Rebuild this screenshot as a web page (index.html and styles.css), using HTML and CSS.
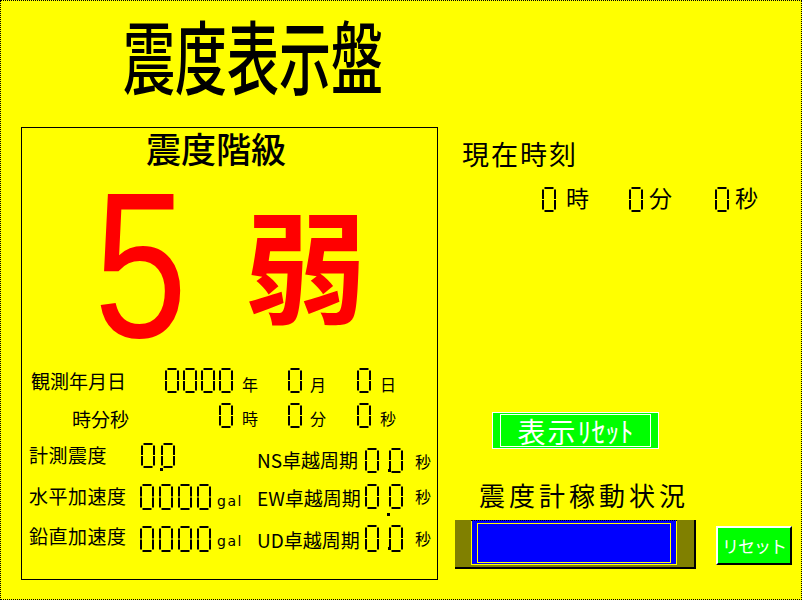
FILE: index.html
```html
<!DOCTYPE html>
<html lang="ja">
<head>
<meta charset="utf-8">
<title>震度表示盤</title>
<link rel="stylesheet" href="styles.css">
</head>
<body>
<svg class="defs" aria-hidden="true">
  <symbol id="seg0" viewBox="0 0 14 26" preserveAspectRatio="none">
    <path d="M2.5 0h9v2h-9z M2.5 24h9v2h-9z M0 2.5h2v10h-2z M0 13.5h2v10h-2z M12 2.5h2v10h-2z M12 13.5h2v10h-2z"/>
  </symbol>
</svg>
<div class="screen">
  <h1 class="title">震度表示盤</h1>
  <div class="main">
    <section class="panel">
      <h2 class="heading">震度階級</h2>
      <div class="big"><span class="big-num">5</span><span class="big-kanji">弱</span></div>

      <div class="row row-date">
        <span class="lab">観測年月日</span>
        <span class="num4">
          <svg class="dg"><use href="#seg0"/></svg>
          <svg class="dg"><use href="#seg0"/></svg>
          <svg class="dg"><use href="#seg0"/></svg>
          <svg class="dg"><use href="#seg0"/></svg>
        </span>
        <span class="unit unit-1">年</span>
        <svg class="dg dg-mid"><use href="#seg0"/></svg>
        <span class="unit unit-2">月</span>
        <svg class="dg dg-last"><use href="#seg0"/></svg>
        <span class="unit unit-3">日</span>
      </div>

      <div class="row row-time">
        <span class="lab">時分秒</span>
        <span class="num4">
          <svg class="dg"><use href="#seg0"/></svg>
        </span>
        <span class="unit unit-1">時</span>
        <svg class="dg dg-mid"><use href="#seg0"/></svg>
        <span class="unit unit-2">分</span>
        <svg class="dg dg-last"><use href="#seg0"/></svg>
        <span class="unit unit-3">秒</span>
      </div>

      <div class="row row-data row-3">
        <span class="lab2">計測震度</span>
        <span class="val">
          <span class="pair pair-small">
            <svg class="dg"><use href="#seg0"/></svg>
            <svg class="dg"><use href="#seg0"/></svg>
            <i class="dot dot-si"></i>
          </span>
        </span>
        <span class="lab3">NS卓越周期</span>
        <span class="pair">
          <svg class="dg"><use href="#seg0"/></svg>
          <svg class="dg"><use href="#seg0"/></svg>
          <i class="dot dot-ns"></i>
        </span>
        <span class="sec">秒</span>
      </div>

      <div class="row row-data row-4">
        <span class="lab2">水平加速度</span>
        <span class="val">
          <span class="num4 num4-wide">
            <svg class="dg dg-26"><use href="#seg0"/></svg>
            <svg class="dg dg-26"><use href="#seg0"/></svg>
            <svg class="dg dg-26"><use href="#seg0"/></svg>
            <svg class="dg dg-26"><use href="#seg0"/></svg>
          </span>
          <span class="gal">gal</span>
        </span>
        <span class="lab3">EW卓越周期</span>
        <span class="pair">
          <svg class="dg"><use href="#seg0"/></svg>
          <svg class="dg"><use href="#seg0"/></svg>
          <i class="dot dot-ew"></i>
        </span>
        <span class="sec">秒</span>
      </div>

      <div class="row row-data row-5">
        <span class="lab2">鉛直加速度</span>
        <span class="val">
          <span class="num4 num4-wide">
            <svg class="dg dg-26"><use href="#seg0"/></svg>
            <svg class="dg dg-26"><use href="#seg0"/></svg>
            <svg class="dg dg-26"><use href="#seg0"/></svg>
            <svg class="dg dg-26"><use href="#seg0"/></svg>
          </span>
          <span class="gal">gal</span>
        </span>
        <span class="lab3">UD卓越周期</span>
        <span class="pair">
          <svg class="dg dg-27"><use href="#seg0"/></svg>
          <svg class="dg dg-27"><use href="#seg0"/></svg>
          <i class="dot dot-ud"></i>
        </span>
        <span class="sec">秒</span>
      </div>
    </section>

    <section class="side">
      <div class="now">現在時刻</div>
      <div class="clock">
        <svg class="dg"><use href="#seg0"/></svg>
        <span class="clock-unit clock-u1">時</span>
        <svg class="dg clock-d2"><use href="#seg0"/></svg>
        <span class="clock-unit clock-u">分</span>
        <svg class="dg clock-d3"><use href="#seg0"/></svg>
        <span class="clock-unit clock-u">秒</span>
      </div>
      <button class="disp-btn" type="button"><span class="disp-btn-in"><span class="disp-kanji">表示</span><span class="disp-kana">ﾘｾｯﾄ</span></span></button>
      <div class="status-title">震度計稼動状況</div>
      <div class="status">
        <div class="bar">
          <div class="lcd"><div class="lcd-frame"><div class="lcd-inner"></div></div></div>
        </div>
        <button class="reset-btn" type="button">リセット</button>
      </div>
    </section>
  </div>
</div>
</body>
</html>
```
FILE: styles.css
```css
body {
  margin: 0;
}

.defs {
  position: absolute;
  width: 0;
  height: 0;
  overflow: hidden;
}

.screen {
  width: 802px;
  height: 600px;
  box-sizing: border-box;
  border: 1px dotted #000;
  background: #ff0;
  color: #000;
  font-family: "Noto Sans CJK JP", "Noto Sans", sans-serif;
  overflow: hidden;
}

.title {
  margin: 14px 0 0 122px;
  width: fit-content;
  height: 52px;
  font-size: 52px;
  line-height: 52px;
  font-weight: 500;
  transform: scaleY(1.53);
  transform-origin: 0 0;
}

.main {
  display: flex;
  align-items: flex-start;
  margin-top: 60px;
}

.panel {
  margin-left: 20px;
  width: 417px;
  height: 453px;
  box-sizing: border-box;
  border: 1px solid #000;
  flex: none;
}

.heading {
  margin: 1.5px 0 0 124px;
  font-size: 35px;
  line-height: 35px;
  font-weight: 500;
}

.big {
  display: flex;
  align-items: flex-start;
  margin: 21.5px 0 22px;
  height: 160px;
}

.big-num {
  margin-left: 72px;
  width: 115px;
  font-family: "Liberation Sans", Arial, sans-serif;
  font-size: 207px;
  line-height: 160px;
  color: #f00;
  transform: scaleX(0.81);
  transform-origin: 0 0;
}

.big-kanji {
  margin: 14px 0 0 36px;
  font-size: 122px;
  line-height: 122px;
  font-weight: 700;
  color: #f00;
}

.row {
  display: flex;
  align-items: flex-start;
}

.row-date { height: 35px; }
.row-time { height: 40px; }
.row-data { height: 41px; }

.dg {
  display: block;
  flex: none;
  width: 14px;
  height: 25px;
  fill: #000;
}

.dg-26 { height: 26px; }
.dg-27 { height: 27px; }

.lab {
  width: 143px;
  box-sizing: border-box;
  padding-left: 9px;
  font-size: 19px;
  line-height: 19px;
  flex: none;
}

.row-date .lab { margin-top: 3px; }
.row-time .lab { margin-top: 6px; padding-left: 50px; }

.num4 {
  display: flex;
  justify-content: flex-end;
  gap: 4px;
  width: 68px;
  flex: none;
}

.num4-wide {
  width: 71px;
  gap: 5px;
}

.unit {
  font-size: 16px;
  line-height: 16px;
  flex: none;
}

.row-date .unit { margin-top: 8px; }
.row-time .unit { margin-top: 7px; }

.unit-1 { margin-left: 9px; }
.dg-mid { margin-left: 30px; }
.unit-2 { margin-left: 8px; }
.dg-last { margin-left: 31px; }
.unit-3 { margin-left: 9px; }

.lab2 {
  width: 118px;
  box-sizing: border-box;
  padding-left: 7px;
  font-size: 19px;
  line-height: 19px;
  letter-spacing: 0.5px;
  flex: none;
}

.val {
  display: flex;
  align-items: flex-start;
  width: 117px;
  flex: none;
}

.lab3 {
  width: 108px;
  font-size: 19px;
  line-height: 19px;
  flex: none;
}

.pair {
  position: relative;
  display: flex;
  gap: 10px;
  flex: none;
}

.pair-small {
  gap: 6px;
  margin-left: 1px;
}

.dot {
  position: absolute;
  width: 3px;
  height: 3px;
  background: #000;
}

.dot-si { left: 19px; top: 25px; }
.dot-ns { left: 23px; top: 21px; }
.dot-ew { left: 22px; top: 29px; }
.dot-ud { left: 23px; top: 22px; }

.sec {
  margin-left: 12px;
  font-size: 16px;
  line-height: 16px;
  flex: none;
}

.gal {
  margin-left: 6px;
  font-family: "DejaVu Sans", sans-serif;
  font-size: 14px;
  line-height: 14px;
  letter-spacing: 1.5px;
}

.row-3 .lab2 { margin-top: 2px; }
.row-3 .lab3 { margin-top: 7px; }
.row-3 .pair:not(.pair-small) { margin-top: 5px; }
.row-3 .sec { margin-top: 10px; }

.row-4 .lab2 { margin-top: 2px; }
.row-4 .gal { margin-top: 10px; }
.row-4 .lab3 { margin-top: 4px; }
.row-4 .sec { margin-top: 4px; }

.row-5 .lab2 { margin-top: 1px; }
.row-5 .num4 { margin-top: 1px; }
.row-5 .gal { margin-top: 9px; }
.row-5 .lab3 { margin-top: 5px; }
.row-5 .sec { margin-top: 5px; }

.side {
  display: flex;
  flex-direction: column;
  align-items: flex-start;
  flex: 1;
}

.now {
  margin: 13px 0 0 24px;
  font-size: 27px;
  line-height: 27px;
  letter-spacing: 2px;
}

.clock {
  display: flex;
  align-items: flex-start;
  margin: 19px 0 0 104px;
}

.clock .dg { margin-top: 1px; }

.clock-unit {
  font-size: 23px;
  line-height: 23px;
}

.clock-u1 { margin-left: 10px; }
.clock-u { margin-left: 6px; }
.clock-d2 { margin-left: 40px; }
.clock-d3 { margin-left: 43px; }

.disp-btn {
  margin: 200px 0 0 54px;
  width: 167px;
  height: 37px;
  box-sizing: border-box;
  padding: 1px 7px;
  border: 1px solid #fff;
  background: #0f0;
  font-family: inherit;
  cursor: pointer;
}

.disp-btn-in {
  display: flex;
  align-items: center;
  justify-content: center;
  height: 100%;
  box-sizing: border-box;
  border: 1px solid #fff;
  color: #fff;
  font-size: 28px;
  line-height: 28px;
}

.disp-kanji { letter-spacing: 2px; }

.status-title {
  margin: 33px 0 0 41px;
  font-size: 26px;
  line-height: 26px;
  letter-spacing: 4px;
}

.status {
  display: flex;
  align-items: flex-start;
  margin: 12px 0 0 17px;
}

.bar {
  width: 241px;
  height: 49px;
  box-sizing: border-box;
  background: #808000;
  border-right: 2px solid #000;
  border-bottom: 2px solid #000;
  padding-left: 16px;
}

.lcd {
  width: 206px;
  height: 45px;
  box-sizing: border-box;
  border-top: 1px dotted #000;
  background: #00f;
}

.lcd-frame {
  height: 100%;
  box-sizing: border-box;
  border: 1px solid #ff0;
  border-top: none;
  padding: 2px 5px 1px;
}

.lcd-inner {
  height: 100%;
  box-sizing: border-box;
  border: 1px solid #ff0;
}

.reset-btn {
  display: flex;
  align-items: center;
  justify-content: center;
  margin: 6px 0 0 20px;
  width: 76px;
  height: 39px;
  box-sizing: border-box;
  padding: 0;
  border: 2px solid;
  border-color: #fff #000 #000 #fff;
  background: #0f0;
  color: #fff;
  font-family: inherit;
  font-size: 17px;
  line-height: 17px;
  letter-spacing: -1px;
  cursor: pointer;
}
```
